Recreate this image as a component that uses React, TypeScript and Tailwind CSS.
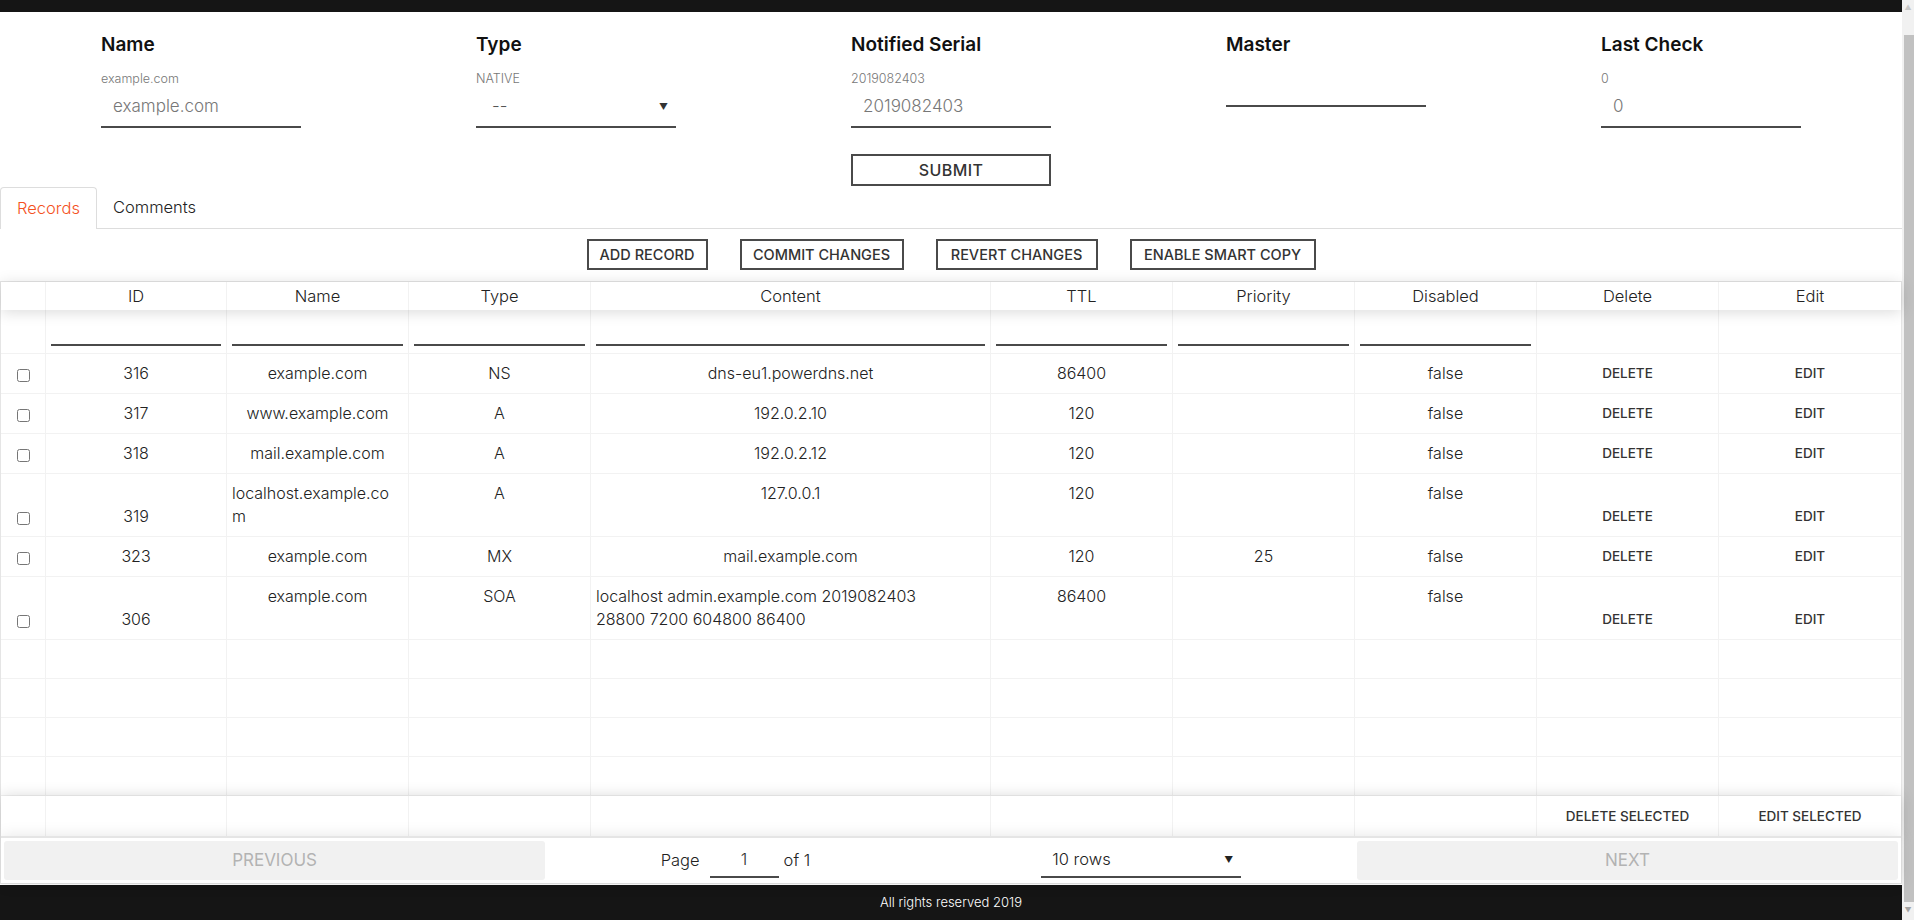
import React from 'react';

type Row = {
  id: string;
  name: string[];
  type: string;
  content: string[];
  ttl: string;
  prio: string;
};

const rows: Row[] = [
  { id: '316', name: ['example.com'], type: 'NS', content: ['dns-eu1.powerdns.net'], ttl: '86400', prio: '' },
  { id: '317', name: ['www.example.com'], type: 'A', content: ['192.0.2.10'], ttl: '120', prio: '' },
  { id: '318', name: ['mail.example.com'], type: 'A', content: ['192.0.2.12'], ttl: '120', prio: '' },
  { id: '319', name: ['localhost.example.co', 'm'], type: 'A', content: ['127.0.0.1'], ttl: '120', prio: '' },
  { id: '323', name: ['example.com'], type: 'MX', content: ['mail.example.com'], ttl: '120', prio: '25' },
  {
    id: '306',
    name: ['example.com'],
    type: 'SOA',
    content: ['localhost admin.example.com 2019082403', '28800 7200 604800 86400'],
    ttl: '86400',
    prio: '',
  },
];

const headers = ['', 'ID', 'Name', 'Type', 'Content', 'TTL', 'Priority', 'Disabled', 'Delete', 'Edit'];

// shared column template (react-table style widths)
const COLS = 'grid grid-cols-[45fr_181fr_182fr_182fr_400fr_182fr_182fr_182fr_182fr_182fr]';

// --- Top form ---

const Field = ({ label, hint, value, kind }: { label: string; hint: string; value: string; kind: string }) => (
  <div className="w-[200px] flex flex-col">
    <div className="h-6 leading-6 text-[19px] font-semibold text-[#111]">{label}</div>
    {kind === 'master' ? (
      <div className="mt-[10px] h-10 border-b-2 border-[#4a4a4a]" />
    ) : (
      <>
        <div className="mt-[14px] h-4 leading-4 text-[12.5px] text-[#777] font-light">{hint}</div>
        <div className="mt-px h-10 border-b-2 border-[#4a4a4a] flex items-center justify-between pl-3 pr-2 text-[17px] font-light text-[#777]">
          {kind === 'select' ? (
            <>
              <span className="pl-1 text-[#555]">{value}</span>
              <span className="text-[9px] text-[#333]">▼</span>
            </>
          ) : (
            <span>{value}</span>
          )}
        </div>
      </>
    )}
  </div>
);

const ZoneForm = () => (
  <div className="pt-[21px]">
    <div className="flex pl-[101px] gap-[175px]">
      <Field label="Name" hint="example.com" value="example.com" kind="input" />
      <Field label="Type" hint="NATIVE" value="--" kind="select" />
      <Field label="Notified Serial" hint="2019082403" value="2019082403" kind="input" />
      <Field label="Master" hint="" value="" kind="master" />
      <Field label="Last Check" hint="0" value="0" kind="input" />
    </div>
    <div className="mt-[26px] flex justify-center">
      <button className="w-[200px] h-8 border-2 border-[#4a4a4a] text-[16px] font-medium text-[#333] tracking-wide">
        SUBMIT
      </button>
    </div>
  </div>
);

const Tabs = () => (
  <div className="mt-px flex border-b border-[#dddddd] h-[42px]">
    <div className="-mb-px h-[42px] px-[16px] flex items-center border-t border-l border-r border-[#dddddd] rounded-t-[4px] bg-white text-[16.5px] font-light text-[#f4511e]">
      Records
    </div>
    <div className="h-[41px] px-[16px] flex items-center text-[16.5px] font-light text-[#222]">Comments</div>
  </div>
);

const ActionButtons = () => (
  <div className="mt-[10px] flex justify-center gap-8">
    {[
      ['ADD RECORD', 'w-[121px]'],
      ['COMMIT CHANGES', 'w-[164px]'],
      ['REVERT CHANGES', 'w-[162px]'],
      ['ENABLE SMART COPY', 'w-[186px]'],
    ].map(([t, w]) => (
      <button
        key={t}
        className={`${w} h-[31px] border-2 border-[#4a4a4a] text-[14.5px] font-medium text-[#333]`}
      >
        {t}
      </button>
    ))}
  </div>
);

// --- Records table ---

const TextCell = ({ lines, last }: { lines: string[]; last?: boolean }) => (
  <div
    className={`flex items-start justify-center px-[5px] py-[8px] leading-[23px] ${
      last ? '' : 'border-r border-[#f2f2f2]'
    }`}
  >
    <div className={`whitespace-nowrap ${lines.length > 1 ? 'text-left w-full' : 'text-center'}`}>
      {lines.map((l, i) => (
        <div key={i}>{l}</div>
      ))}
    </div>
  </div>
);

const BottomCell = ({ children, last }: { children: React.ReactNode; last?: boolean }) => (
  <div
    className={`flex items-end justify-center px-[5px] py-[8px] leading-[23px] ${
      last ? '' : 'border-r border-[#f2f2f2]'
    }`}
  >
    {children}
  </div>
);

const RecordRow = ({ r }: { r: Row }) => (
  <div className={`${COLS} border-b border-[#f2f2f2] text-[16px] font-light text-[#222]`}>
    <BottomCell>
      <div className="h-[23px] flex items-center">
        <input type="checkbox" className="w-[13px] h-[13px] mt-1" />
      </div>
    </BottomCell>
    <BottomCell>{r.id}</BottomCell>
    <TextCell lines={r.name} />
    <TextCell lines={[r.type]} />
    <TextCell lines={r.content} />
    <TextCell lines={[r.ttl]} />
    <TextCell lines={r.prio ? [r.prio] : ['']} />
    <TextCell lines={['false']} />
    <BottomCell>
      <span className="text-[13.5px] font-medium text-[#333]">DELETE</span>
    </BottomCell>
    <BottomCell last>
      <span className="text-[13.5px] font-medium text-[#333]">EDIT</span>
    </BottomCell>
  </div>
);

const EmptyRow = () => (
  <div className={`${COLS} h-[39px] border-b border-[#f2f2f2]`}>
    {headers.map((h, i) => (
      <div key={i} className={i === headers.length - 1 ? '' : 'border-r border-[#f2f2f2]'} />
    ))}
  </div>
);

const RecordsTable = () => (
  <div className="mt-[11px] border border-[rgba(0,0,0,0.1)] flex flex-col">
    {/* header */}
    <div className={`${COLS} relative z-10 h-[28px] bg-white shadow-[0_2px_15px_0_rgba(0,0,0,0.15)]`}>
      {headers.map((h, i) => (
        <div
          key={i}
          className={`flex items-center justify-center text-[16.5px] font-light text-[#222] ${
            i === headers.length - 1 ? '' : 'border-r border-[#f2f2f2]'
          }`}
        >
          {h}
        </div>
      ))}
    </div>

    {/* filters */}
    <div className={`${COLS} h-[44px] border-b border-[#f2f2f2]`}>
      {headers.map((h, i) => (
        <div
          key={i}
          className={`flex items-end px-[5px] pb-[7px] ${i === headers.length - 1 ? '' : 'border-r border-[#f2f2f2]'}`}
        >
          {i > 0 && i < 8 && <div className="w-full h-[30px] border-b-2 border-[#4a4a4a]" />}
        </div>
      ))}
    </div>

    {rows.map(r => (
      <RecordRow key={r.id} r={r} />
    ))}
    <EmptyRow />
    <EmptyRow />
    <EmptyRow />
    <EmptyRow />

    {/* tfoot */}
    <div className={`${COLS} relative z-10 h-[40px] bg-white shadow-[0_0_15px_0_rgba(0,0,0,0.15)]`}>
      {headers.map((h, i) => (
        <div
          key={i}
          className={`flex items-center justify-center text-[13.5px] font-medium text-[#333] ${
            i === headers.length - 1 ? '' : 'border-r border-[#f2f2f2]'
          }`}
        >
          {i === 8 ? 'DELETE SELECTED' : i === 9 ? 'EDIT SELECTED' : ''}
        </div>
      ))}
    </div>

    {/* pagination */}
    <div className="relative z-10 flex p-[3px] h-[47px] border-t-2 border-[rgba(0,0,0,0.1)] bg-white shadow-[0_0_15px_0_rgba(0,0,0,0.1)]">
      <button className="flex-1 rounded-[3px] bg-[#f1f1f1] text-[17px] text-[#b3b3b3]">PREVIOUS</button>
      <div className="flex-[1.5] flex items-center justify-around text-[16.5px] font-light text-[#222]">
        <div className="flex items-center">
          <span>Page</span>
          <div className="ml-[10px] w-[69px] h-[34px] border-b-2 border-[#4a4a4a] flex items-center justify-center text-[#333]">
            1
          </div>
          <span className="ml-[5px]">of 1</span>
        </div>
        <div className="w-[200px] h-[34px] border-b-2 border-[#4a4a4a] flex items-center justify-between pl-[11px] pr-2">
          <span>10 rows</span>
          <span className="text-[9px] text-[#222]">▼</span>
        </div>
      </div>
      <button className="flex-1 rounded-[3px] bg-[#f1f1f1] text-[17px] text-[#b3b3b3]">NEXT</button>
    </div>
  </div>
);

// browser scrollbar as it appears in the screenshot
const ScrollBar = () => (
  <div className="w-[12px] h-full bg-[#f1f1f1] flex flex-col">
    <div className="h-[17px] flex items-center justify-center text-[7px] text-[#c8c8c8]">▲</div>
    <div className="mt-[18px] h-[867px] ml-[2px] bg-[#c1c1c1]" />
    <div className="flex-1 flex items-center justify-center text-[7px] text-[#a3a3a3]">▼</div>
  </div>
);

export default function App() {
  return (
    <div className="h-[920px] overflow-hidden flex font-['Inter','Open_Sans',sans-serif] bg-white text-[#222]">
      <div className="flex-1 flex flex-col">
        <div className="h-3 bg-[#151515]" />
        <ZoneForm />
        <Tabs />
        <ActionButtons />
        <RecordsTable />
        <footer className="mt-[1px] flex-1 bg-[#151515] flex flex-col items-center justify-center text-[13px] text-white font-light">
          All rights reserved 2019
        </footer>
      </div>
      <ScrollBar />
    </div>
  );
}
